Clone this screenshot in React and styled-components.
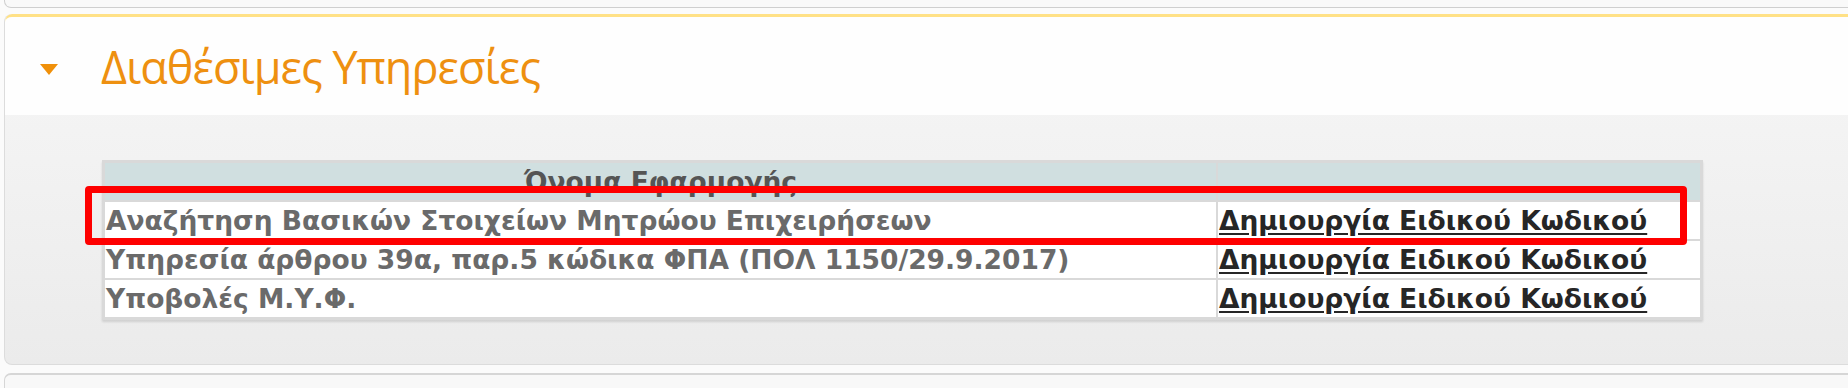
import styled, { createGlobalStyle } from 'styled-components'

const GlobalStyle = createGlobalStyle`
  html, body {
    margin: 0;
    padding: 0;
    background: #fbfbfb;
  }
  #root {
    overflow: hidden;
    height: 388px;
  }
`

const Page = styled.div`
  padding: 0 0 0 4px;
  margin-right: -30px;
`

const PrevCard = styled.div`
  height: 7px;
  background: #f9f9f9;
  border: 1px solid #cfcfcf;
  border-top: none;
  border-radius: 0 0 7px 7px;
`

const Panel = styled.section`
  margin-top: 6px;
  border: 1px solid #dcdcdc;
  border-top: none;
  border-radius: 8px;
  overflow: hidden;
  background: linear-gradient(#f7f7f7, #ebebeb);
`

const PanelHeader = styled.div`
  display: flex;
  align-items: center;
  height: 98px;
  padding-left: 35px;
  background: #fefefe;
  border-top: 3px solid #ffe186;
  border-left: 1px solid #ffeaa8;
  border-radius: 8px 0 0 0;
  margin-left: -1px;
`

const Arrow = styled.span`
  width: 0;
  height: 0;
  border-left: 9px solid transparent;
  border-right: 9px solid transparent;
  border-top: 11px solid #f0900a;
  margin: 6px 43px 0 0;
`

const Title = styled.h2`
  margin: 0;
  font-family: 'Open Sans', 'Noto Sans', sans-serif;
  font-weight: 400;
  font-size: 45px;
  color: #ee9010;
  letter-spacing: -1px;
`

const PanelBody = styled.div`
  padding: 45px 0 44px 97px;
`

const TableWrap = styled.div`
  position: relative;
  width: 1601px;
`

const Table = styled.table`
  width: 100%;
  border-collapse: separate;
  border-spacing: 2px;
  padding: 1px;
  background: #d9d9d9;
  box-shadow: 0 2px 2px rgba(0, 0, 0, 0.12);
  font-family: 'DejaVu Sans', Verdana, sans-serif;
  font-size: 26.5px;
  font-weight: 700;
`

const HeadCell = styled.th`
  height: 37px;
  padding: 0;
  background: #d0dfe0;
  color: #555;
  font-weight: 700;
  text-align: center;
  width: ${({ $w }) => $w || 'auto'};
`

const Cell = styled.td`
  height: 37px;
  padding: 0 0 0 1px;
  background: #fff;
  color: #6a6a6a;
  white-space: nowrap;
`

const Link = styled.a`
  color: #262626;
  text-decoration: underline;
  text-underline-offset: 3px;
  cursor: pointer;
`

const Highlight = styled.div`
  position: absolute;
  left: -17px;
  top: 26px;
  width: 1602px;
  height: 59px;
  box-sizing: border-box;
  border: 7px solid #fe0000;
  border-radius: 4px;
  pointer-events: none;
`

const NextCard = styled.div`
  margin-top: 8px;
  height: 30px;
  background: #f8f8f8;
  border: 1px solid #d6d6d6;
  border-top: 2px solid #d6d6d6;
  border-radius: 7px 7px 0 0;
`

const services = [
  'Αναζήτηση Βασικών Στοιχείων Μητρώου Επιχειρήσεων',
  'Υπηρεσία άρθρου 39α, παρ.5 κώδικα ΦΠΑ (ΠΟΛ 1150/29.9.2017)',
  'Υποβολές Μ.Υ.Φ.',
]

export default function App() {
  return (
    <>
      <GlobalStyle />
      <Page>
        <PrevCard />
        <Panel>
          <PanelHeader>
            <Arrow />
            <Title>Διαθέσιμες Υπηρεσίες</Title>
          </PanelHeader>
          <PanelBody>
            <TableWrap>
              <Table>
                <thead>
                  <tr>
                    <HeadCell $w="1111px">Όνομα Εφαρμογής</HeadCell>
                    <HeadCell />
                  </tr>
                </thead>
                <tbody>
                  {services.map((name) => (
                    <tr key={name}>
                      <Cell>{name}</Cell>
                      <Cell>
                        <Link>Δημιουργία Ειδικού Κωδικού</Link>
                      </Cell>
                    </tr>
                  ))}
                </tbody>
              </Table>
              <Highlight />
            </TableWrap>
          </PanelBody>
        </Panel>
        <NextCard />
      </Page>
    </>
  )
}
